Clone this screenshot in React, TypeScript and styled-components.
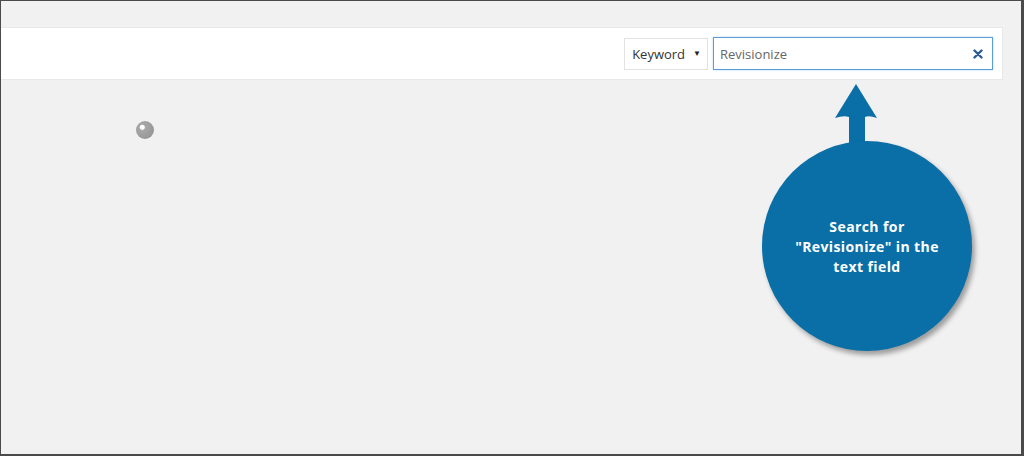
import styled, { createGlobalStyle } from 'styled-components';

const GlobalStyle = createGlobalStyle`
  html, body {
    margin: 0;
    padding: 0;
    background: #f1f1f1;
  }
  * {
    box-sizing: border-box;
  }
`;

const Frame = styled.div`
  position: relative;
  width: 1024px;
  height: 456px;
  overflow: hidden;
  background: #f1f1f1;
  border-top: 1px solid #4a4a4a;
  border-left: 1px solid #4a4a4a;
  border-right: 3px solid #4a4a4a;
  border-bottom: 2px solid #4a4a4a;
  font-family: "Open Sans", "Liberation Sans", sans-serif;
`;

const Toolbar = styled.div`
  display: flex;
  align-items: center;
  justify-content: flex-end;
  gap: 5px;
  height: 53px;
  margin-top: 26px;
  margin-right: 18px;
  padding-right: 9px;
  background: #ffffff;
  border: 1px solid #e8e8e8;
  border-left: none;
`;

const Select = styled.div`
  display: flex;
  align-items: center;
  gap: 8px;
  height: 32px;
  padding: 0 6px 0 7px;
  background: #ffffff;
  border: 1px solid #e2e2e2;
  color: #333;
  font-size: 13px;
`;

const Caret = styled.span`
  font-size: 8px;
  color: #222;
  margin-top: -3px;
`;

const SearchBox = styled.div`
  display: flex;
  align-items: center;
  justify-content: space-between;
  width: 280px;
  height: 33px;
  padding: 0 9px 0 6px;
  border: 1px solid #5b9dd9;
  box-shadow: 0 0 2px rgba(30, 140, 190, 0.35);
  background: #fff;
  color: #666;
  font-size: 13px;
`;

const Content = styled.div`
  position: relative;
  height: 320px;
  padding-top: 41px;
`;

const Spinner = styled.div`
  width: 18px;
  height: 18px;
  margin-left: 135px;
  border-radius: 50%;
  background: radial-gradient(circle at 35% 35%, #ffffff 0 2px, #a7a7a7 3px, #8f8f8f 100%);
`;

const Callout = styled.div`
  position: absolute;
  left: 760px;
  top: 4px;
  width: 212px;
  height: 272px;
`;

const Arrow = styled.svg`
  position: absolute;
  left: 74px;
  top: 0;
`;

const Bubble = styled.div`
  position: absolute;
  left: 1px;
  top: 57px;
  width: 210px;
  height: 210px;
  border-radius: 50%;
  background: #0a6ea7;
  box-shadow: 3px 4px 5px rgba(0, 0, 0, 0.35);
  display: flex;
  align-items: center;
  justify-content: center;
  text-align: center;
  color: #ffffff;
  font-family: "Open Sans", "Lato", sans-serif;
  font-weight: 700;
  font-size: 14px;
  line-height: 20px;
  letter-spacing: 0.4px;
  padding-top: 2px;
`;

const App = () => (
  <>
    <GlobalStyle />
    <Frame>
      <Toolbar>
        <Select>
          Keyword <Caret>▼</Caret>
        </Select>
        <SearchBox>
          <span>Revisionize</span>
          <svg width="10" height="10" viewBox="0 0 10 10">
            <path d="M1.5 1.5 L8.5 8.5 M8.5 1.5 L1.5 8.5" stroke="#2a5a96" strokeWidth="2.4" strokeLinecap="round" />
          </svg>
        </SearchBox>
      </Toolbar>
      <Content>
        <Spinner />
        <Callout>
          <Arrow width="44" height="66" viewBox="0 0 44 66">
            <path d="M21 0 L42 34 Q34 31 30 33 L30 66 L14 66 L14 33 Q9 31 0 34 Z" fill="#0a6ea7" />
          </Arrow>
          <Bubble>
            Search for
            <br />
            "Revisionize" in the
            <br />
            text field
          </Bubble>
        </Callout>
      </Content>
    </Frame>
  </>
);

export default App;
